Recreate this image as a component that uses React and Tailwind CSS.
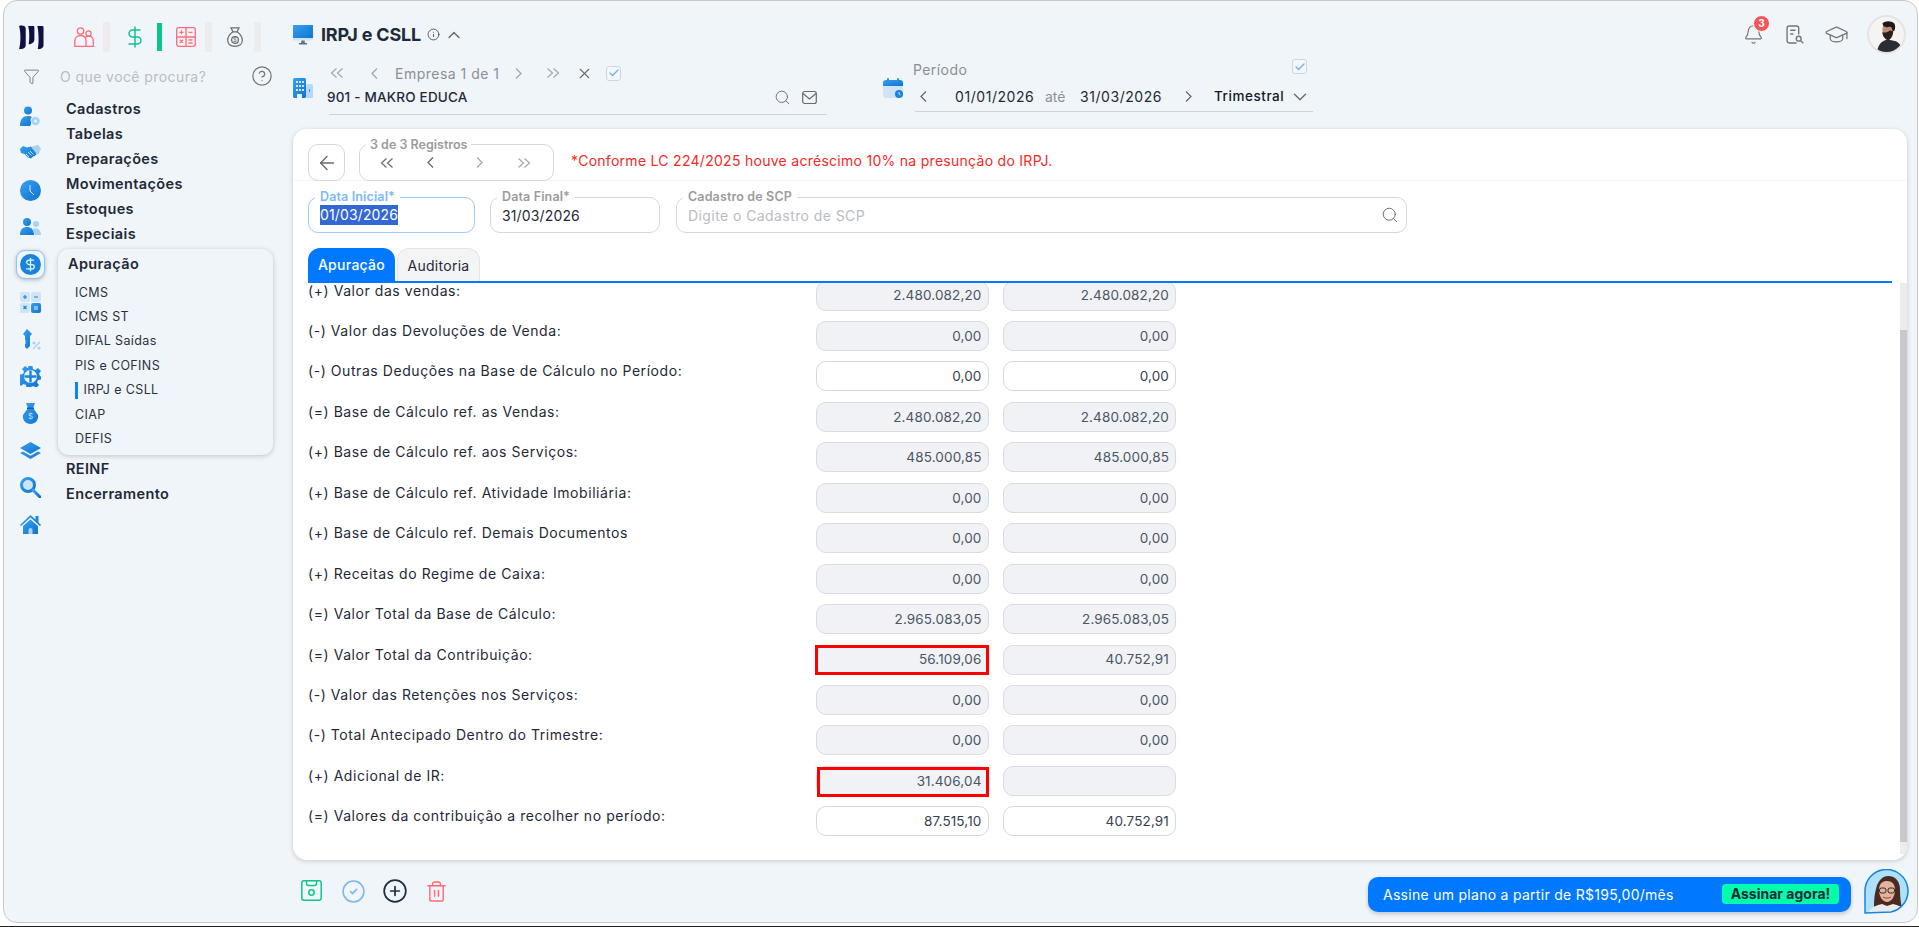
import React from 'react'
import { ArrowLeft, Bell, Check, ChevronDown, ChevronUp, CircleCheck, CircleHelp, CirclePlus, DollarSign, Funnel, GraduationCap, Info, Search, Trash2, X } from 'lucide-react'

const menuTop = ['Cadastros', 'Tabelas', 'Preparações', 'Movimentações', 'Estoques', 'Especiais']
const subMenu = ['ICMS', 'ICMS ST', 'DIFAL Saídas', 'PIS e COFINS', 'IRPJ e CSLL', 'CIAP', 'DEFIS']

const rows = [
    { label: '(+) Valor das vendas:', a: '2.480.082,20', b: '2.480.082,20' },
    { label: '(-) Valor das Devoluções de Venda:', a: '0,00', b: '0,00' },
    { label: '(-) Outras Deduções na Base de Cálculo no Período:', a: '0,00', b: '0,00', open: true },
    { label: '(=) Base de Cálculo ref. as Vendas:', a: '2.480.082,20', b: '2.480.082,20' },
    { label: '(+) Base de Cálculo ref. aos Serviços:', a: '485.000,85', b: '485.000,85' },
    { label: '(+) Base de Cálculo ref. Atividade Imobiliária:', a: '0,00', b: '0,00' },
    { label: '(+) Base de Cálculo ref. Demais Documentos', a: '0,00', b: '0,00' },
    { label: '(+) Receitas do Regime de Caixa:', a: '0,00', b: '0,00' },
    { label: '(=) Valor Total da Base de Cálculo:', a: '2.965.083,05', b: '2.965.083,05' },
    { label: '(=) Valor Total da Contribuição:', a: '56.109,06', b: '40.752,91', mark: 'top-[-1px] bottom-[-1px] left-[-2px] right-[-1px]' },
    { label: '(-) Valor das Retenções nos Serviços:', a: '0,00', b: '0,00' },
    { label: '(-) Total Antecipado Dentro do Trimestre:', a: '0,00', b: '0,00' },
    { label: '(+) Adicional de IR:', a: '31.406,04', b: '', mark: 'top-0 bottom-[-2px] left-0 right-[-1px]' },
    { label: '(=) Valores da contribuição a recolher no período:', a: '87.515,10', b: '40.752,91', open: true },
]

function Chevrons({ left, className }) {
    return (
        <svg viewBox="0 0 14 10" className={className} fill="none" stroke="currentColor" strokeWidth="1.2">
            {left ? <path d="M6.5 .5 1.5 5l5 4.5M12.5 .5 7.5 5l5 4.5" /> : <path d="M1.5 .5 6.5 5l-5 4.5M7.5 .5 12.5 5l-5 4.5" />}
        </svg>
    )
}

function Chev({ left, className }) {
    return (
        <svg viewBox="0 0 7 11" className={className} fill="none" stroke="currentColor" strokeWidth="1.3">
            {left ? <path d="M6 .5 1 5.5l5 5" /> : <path d="M1 .5l5 5-5 5" />}
        </svg>
    )
}

function CheckBox({ className }) {
    return (
        <span className={`flex items-center justify-center rounded-[3px] border border-[#cfd6de] bg-[#f3f6fa] ${className}`}>
            <Check size={12} strokeWidth={2.5} className="text-[#6fb1ee]" />
        </span>
    )
}

function Grad({ id }) {
    return (
        <defs>
            <linearGradient id={id} x1="0" y1="0" x2="1" y2="1">
                <stop offset="0" stopColor="#38a0f0" />
                <stop offset="1" stopColor="#0f74cf" />
            </linearGradient>
        </defs>
    )
}

function SideIcon({ name }) {
    const g = 'url(#g' + name + ')'
    const light = '#a9d2f3'
    return (
        <svg viewBox="0 0 21 21" className="w-[21px] h-[21px]">
            <Grad id={'g' + name} />
            {name === 'user' && <>
                <circle cx="8" cy="4.500" r="4" fill={g} />
                <path d="M0 20c0-7 3-10 8-10 2 0 3 .5 4 1-1.500 1-2 3-1 5 0 2 0 3-1 4z" fill={g} />
                <circle cx="15.500" cy="15" r="4.300" fill={light} />
                <circle cx="15.500" cy="15" r="1.500" fill="#f0f5fa" />
            </>}
            {name === 'hands' && <>
                <path d="M0 6l3-3 4 1.500 4-1 6 6.500-2 3-2 .5-2 2-3-1-3.500-3.500L1 10z" fill={g} />
                <path d="M12 3.500l4-1 2-1 3 4-2.500 6-1.500 0-5-6.500z" fill={light} />
                <path d="M8 9l3.500 3.500M10 8l3.500 3.500M6 11l3 3" stroke="#f0f5fa" strokeWidth=".8" />
            </>}
            {name === 'clock' && <>
                <circle cx="10.500" cy="10.500" r="10.500" fill={g} />
                <path d="M10 5v6l4 4" stroke="#cfe6fa" strokeWidth="1" fill="none" />
            </>}
            {name === 'users' && <>
                <circle cx="7" cy="5" r="4" fill={g} />
                <path d="M0 18c0-6 3-8 7-8s7 2 7 8z" fill={g} />
                <circle cx="16" cy="7" r="3" fill={light} />
                <path d="M12 12c5-2 9 0 9 6h-6z" fill={light} />
            </>}
            {name === 'calc' && <>
                <rect x="0" y="0" width="10" height="10" rx="2" fill="#cfe4f7" />
                <rect x="11" y="0" width="10" height="10" rx="2" fill="#cfe4f7" />
                <rect x="0" y="11" width="10" height="10" rx="2" fill="#cfe4f7" />
                <rect x="11" y="11" width="10" height="10" rx="2" fill={g} />
                <path d="M3 5h4M5 3v4M14 5h4M3.500 14l3 3M6.500 14l-3 3" stroke="#1a84dc" strokeWidth="1.200" />
                <path d="M14 15h4M14 17h4" stroke="#e5f2fd" strokeWidth="1.200" />
            </>}
            {name === 'key' && <>
                <path d="M7 0l5 5-2 2v10l-3 3-2-2v-3l1-1-1-1 1-1-1-1V7L3 5z" fill={g} />
                <path d="M13 20l7-7" stroke={light} strokeWidth="1.500" />
                <circle cx="14" cy="14" r="1.600" fill={light} />
                <circle cx="19" cy="19" r="1.600" fill={light} />
            </>}
            {name === 'gear' && <>
                <path d="M8.500 0h4l.5 3 2.500 1 2.500-2 3 3-2 2.500 1 2.500 1 .5v3l-3 .5-1 2.500 2 2.500-3 3-2.500-2-2.500 1-.5 1h-4l-.5-3-2.500-1-2.500 2-3-3 2-2.500L0 12.500v-4l3-.5 1-2.500-2-2.500 3-3 2.500 2L8 2z" fill={g} />
                <circle cx="10.500" cy="10.500" r="6.500" fill="#f0f5fa" />
                <path d="M10.500 4.500v12M4.500 10.500h12" stroke="#1a84dc" strokeWidth="2.400" />
            </>}
            {name === 'bag' && <>
                <path d="M6 0h9l-2 5 5 7c1 5-3 9-7.500 9S2 17 3 12l5-7z" fill={g} />
                <rect x="7" y="4.500" width="7" height="1.500" fill="#0c63b5" />
                <text x="10.500" y="16" fontSize="8" textAnchor="middle" fill="#bfe0fa">$</text>
            </>}
            {name === 'stack' && <>
                <path d="M10.500 2 21 8l-10.500 6L0 8z" fill={g} />
                <path d="M3 11.500 0 13l10.500 6L21 13l-3-1.500-7.500 4.300z" fill={g} />
            </>}
            {name === 'search' && <>
                <circle cx="8" cy="8" r="6.500" fill="#cfe4f7" stroke={g} strokeWidth="3" />
                <path d="M13 13l7 7" stroke={g} strokeWidth="3" strokeLinecap="round" />
            </>}
            {name === 'home' && <>
                <path d="M0 10 10.500 0l5 4.500V1h3v6.500L21 10l-1 1L10.500 2.500 1 11z" fill={g} />
                <path d="M3 11l7.500-6.500L18 11v8H3z" fill={g} />
                <path d="M8.500 19v-4a2 2 0 0 1 4 0v4z" fill={light} />
            </>}
        </svg>
    )
}

function Field({ label, w, focus, children }) {
    return (
        <div className={`relative h-[36px] rounded-[10px] border flex items-center px-[11px] text-[14px] tracking-[0.01em] ${w} ${focus ? 'border-[#9ccbfb]' : 'border-[#d3d7de]'}`}>
            <span className={`absolute -top-[8px] left-[6px] bg-white px-[5px] text-[12.500px] leading-[14px] font-semibold whitespace-nowrap ${focus ? 'text-[#7db8fb]' : 'text-[#9b9b9b]'}`}>{label}</span>
            {children}
        </div>
    )
}

function Value({ v, open, mark, w }) {
    return (
        <div className={`relative h-[30px] rounded-[10px] border flex items-center justify-end pr-[6px] text-[13.500px] tracking-[0.01em] ${w} ${open ? 'bg-white border-[#d3d7de] text-[#374151]' : 'bg-[#f0f2f5] border-[#d8dbe1] text-[#4b5563]'}`}>
            {v}
            {mark && <span className={`absolute border-[3px] border-[#ff0000] ${mark}`}></span>}
        </div>
    )
}

function Sidebar() {
    return (
        <aside className="w-[289px] shrink-0 flex flex-col">
            <div className="h-[30px] mt-[21px] ml-[15px] flex items-center">
                <svg viewBox="0 0 26 26" className="w-[25px] h-[25px] text-[#101042]" fill="currentColor">
                    <path d="M0 1c4-1 7 0 7 3v17c0 3-3 4-7 4 2-5 2-19 0-24z" />
                    <path d="M9.500 1h5c1 0 1.500 .5 1.500 1.500V15c0 3-3 5-6 5 1-5 1-14-.5-19z" />
                    <path d="M19 1h5c1 0 1.500 .5 1.500 1.500V21c0 3-3 4-6 4 1.500-7 1-18-.5-24z" />
                </svg>
                <svg viewBox="0 0 20 20" className="w-[20px] h-[20px] ml-[30px] text-[#ff6b76]" fill="none" stroke="currentColor" strokeWidth="1.300">
                    <circle cx="6.500" cy="4" r="3.200" />
                    <circle cx="14.500" cy="6.500" r="2.600" />
                    <path d="M.8 19.300V14c0-3 2-5.500 5.700-5.500S12 11 12 14v5.300z" />
                    <path d="M11 11c1-1.500 2-1.800 3.500-1.800 3 0 4.800 2 4.800 5v5.100H12" />
                </svg>
                <span className="w-[7px] h-[30px] ml-[9px] bg-[#ececec]"></span>
                <DollarSign size={24} strokeWidth={1.500} className="ml-[13px] text-[#10c48c]" />
                <span className="w-[5px] h-[28px] ml-[10px] bg-[#0cc48c]"></span>
                <svg viewBox="0 0 20 20" className="w-[20px] h-[20px] ml-[14px] text-[#ff6b76]" fill="none" stroke="currentColor" strokeWidth="1.300">
                    <rect x=".7" y=".7" width="18.600" height="18.600" rx="2" />
                    <path d="M10 .7v18.600M.7 10h18.600M3.500 5.300h4M5.500 3.300v4M12.500 5.300h4M3.800 12.800l3.200 3.200M7 12.800l-3.200 3.200M12.500 13h4M12.500 16h4" />
                </svg>
                <span className="w-[7px] h-[30px] ml-[9px] bg-[#ececec]"></span>
                <svg viewBox="0 0 16 20" className="w-[16px] h-[20px] ml-[15px] text-[#6b6b6b]" fill="none" stroke="currentColor" strokeWidth="1.200">
                    <path d="M4 .8h8l-2 4H6zM6 4.800c-3 2-5.300 5-5.300 8.500 0 4 3 6 7.300 6s7.300-2 7.300-6c0-3.500-2.300-6.500-5.300-8.500" />
                    <circle cx="8" cy="13" r="3.400" />
                    <text x="8" y="15" fontSize="6" textAnchor="middle" fill="currentColor" stroke="none">$</text>
                </svg>
                <span className="w-[7px] h-[30px] ml-[11px] bg-[#ececec]"></span>
            </div>
            <div className="h-[20px] mt-[14px] flex items-center">
                <Funnel size={17} strokeWidth={1.200} className="ml-[19px] text-[#6b6b6b]" />
                <span className="ml-[20px] text-[14px] tracking-[0.03em] text-[#b9bdc3]">O que você procura?</span>
                <CircleHelp size={22} strokeWidth={1.300} className="ml-auto mr-[20px] text-[#757575]" />
            </div>
            <div className="flex mt-[11.500px]">
                <div className="ml-[16px] w-[21px] flex flex-col">
                    {['user', 'hands', 'clock', 'users', 'dollar', 'calc', 'key', 'gear', 'bag', 'stack', 'search', 'home'].map((n) => (
                        <div key={n} className="h-[37.200px] flex items-center justify-center">
                            {n === 'dollar' ? (
                                <span className="shrink-0 w-[29px] h-[29px] rounded-[9px] border border-[#8cc4f2] bg-[#f0f5fa] shadow-[0_1px_4px_rgba(0,0,0,0.25)] flex items-center justify-center">
                                    <span className="w-[21px] h-[21px] rounded-full bg-[#1a84dc] text-[#e8f4fe] flex items-center justify-center">
                                        <DollarSign size={15} strokeWidth={2} />
                                    </span>
                                </span>
                            ) : <SideIcon name={n} />}
                        </div>
                    ))}
                </div>
                <nav className="ml-[25px] -mt-[1.500px] w-[215px] flex flex-col text-[14.500px] font-semibold tracking-[0.025em] text-[#1f2937]">
                    {menuTop.map((m) => <div key={m} className="h-[25px] leading-[25px]">{m}</div>)}
                    <div className="-ml-[8px] w-[215px] mt-[2.500px] rounded-[11px] bg-[#f0f5fa] shadow-[0_1px_5px_rgba(0,0,0,0.2)] pt-[4px] pb-[3px]">
                        <div className="h-[22px] leading-[22px] pl-[10px]">Apuração</div>
                        <div className="mt-[6.300px] flex flex-col pl-[17px] text-[12.500px] font-normal tracking-[0.03em] text-[#2a3240]">
                            {subMenu.map((s) => (
                                <div key={s} className="h-[24.400px] flex items-center">
                                    {s === 'IRPJ e CSLL' && <span className="w-[3px] h-[17px] bg-[#0a84ff] mr-[5.500px]"></span>}
                                    {s}
                                </div>
                            ))}
                        </div>
                    </div>
                    <div className="h-[25px] leading-[25px] mt-[1.500px]">REINF</div>
                    <div className="h-[25px] leading-[25px]">Encerramento</div>
                </nav>
            </div>
        </aside>
    )
}

function Header() {
    return (
        <div className="h-[128px] shrink-0 flex flex-col">
            <div className="h-[39px] mt-[14px] flex items-center">
                <svg viewBox="0 0 20 20" className="w-[20px] h-[20px]">
                    <Grad id="gmon" />
                    <rect y="0" width="20" height="13" fill="url(#gmon)" />
                    <rect y="13" width="20" height="2.500" fill="#cfe4f7" />
                    <path d="M8.500 15.500h3l.5 2.500h2v1.500H6V18h2z" fill="#5a7184" />
                </svg>
                <span className="ml-[8px] text-[18px] font-bold tracking-[-0.01em] text-[#1f2937]">IRPJ e CSLL</span>
                <Info size={13} strokeWidth={1.500} className="ml-[6px] text-[#374151]" />
                <ChevronUp size={20} strokeWidth={1.700} className="ml-[4px] text-[#6b6b6b]" />
                <div className="ml-auto flex items-center mr-[11px]">
                    <div className="relative">
                        <Bell size={21} strokeWidth={1.300} className="text-[#757575]" />
                        <span className="absolute -top-[9px] left-[10px] w-[17px] h-[17px] rounded-full bg-[#f2555a] border border-white text-white text-[10px] font-bold flex items-center justify-center">3</span>
                    </div>
                    <svg viewBox="0 0 17 18" className="w-[18px] h-[19px] ml-[22px] text-[#757575]" fill="none" stroke="currentColor" strokeWidth="1.300">
                        <path d="M10 17H3a2 2 0 0 1-2-2V3a2 2 0 0 1 2-2h7a2 2 0 0 1 2 2v6" />
                        <path d="M4 5h5M4 8.500h3" />
                        <circle cx="12" cy="13" r="2.300" />
                        <path d="M14 15l2.300 2.300" />
                    </svg>
                    <GraduationCap size={25} strokeWidth={1.200} className="ml-[20px] text-[#757575]" />
                    <svg viewBox="0 0 39 39" className="w-[39px] h-[39px] ml-[18px] rounded-full border-[2px] border-[#e8e3e3] bg-[#f6f3f3]">
                        <path d="M9 39c1-9 6-13 12-14l9 2c4 2 7 6 7 12z" fill="#2a2d33" />
                        <path d="M15 14c0-5 3-7 7-7 3 0 5 2 5 6 0 5-2 10-6 11-4 0-5-3-6-6z" fill="#b98f76" />
                        <path d="M15 7c3-3 10-3 13 0 2 3 1 7 0 9l-2-1c0-2-1-4-3-4-3 1-5 0-7-1z" fill="#1f1a18" />
                        <path d="M15 17c3 1 6 0 8-2l4 1c0 5-3 10-6 10-3-1-6-5-6-9z" fill="#2a211d" />
                    </svg>
                </div>
            </div>
            <div className="flex flex-1">
                <div className="w-[534px] flex">
                    <svg viewBox="0 0 20 20" className="w-[20px] h-[20px] mt-[24px] shrink-0">
                        <Grad id="gbld" />
                        <rect x="0" y="0" width="13" height="20" rx="1.500" fill="url(#gbld)" />
                        <rect x="13" y="6" width="7" height="14" rx="1.500" fill="#b9d8f3" />
                        <path d="M3 3h2v2H3zM6 3h2v2H6zM9 3h2v2H9zM3 7h2v2H3zM6 7h2v2H6zM9 7h2v2H9zM3 11h2v2H3zM6 11h2v2H6zM9 11h2v2H9z" fill="#cfe4f7" />
                        <path d="M4 20v-4h5v4z" fill="#e3effa" />
                        <rect x="16" y="11" width="1" height="3" fill="#2c8fe3" />
                    </svg>
                    <div className="ml-[16px] flex-1 flex flex-col">
                        <div className="h-[16px] mt-[11px] flex items-center text-[#a4a8ae]">
                            <Chevrons left className="w-[14px] h-[10px] ml-[1px]" />
                            <Chev left className="w-[7px] h-[11px] ml-[27px]" />
                            <span className="ml-[17px] w-[106px] text-[14px] tracking-[0.035em] text-[#8b8f95] whitespace-nowrap">Empresa 1 de 1</span>
                            <Chev className="w-[7px] h-[11px] ml-[14px]" />
                            <Chevrons className="w-[14px] h-[10px] ml-[24px]" />
                            <X size={17} strokeWidth={1.600} className="ml-[16px] text-[#6b6b6b]" />
                            <CheckBox className="w-[15px] h-[15px] ml-[13px]" />
                        </div>
                        <div className="h-[28px] mt-[6px] pb-[6px] border-b border-[#cfd3da] flex items-center">
                            <span className="-ml-[2px] text-[13.500px] font-medium tracking-[0.015em] text-[#1f2937]">901 - MAKRO EDUCA</span>
                            <Search size={17} strokeWidth={1.300} className="ml-auto text-[#6b6b6b]" />
                            <svg viewBox="0 0 15 15" className="w-[15px] h-[15px] ml-[11px] mr-[10px] text-[#6b6b6b]" fill="none" stroke="currentColor" strokeWidth="1.200">
                                <rect x=".7" y="1.500" width="13.600" height="12" rx="2" />
                                <path d="M1 3.500 7.500 9 14 3.500" />
                            </svg>
                        </div>
                    </div>
                </div>
                <div className="ml-[56px] flex">
                    <svg viewBox="0 0 20 20" className="w-[20px] h-[20px] mt-[24px] shrink-0">
                        <Grad id="gcal" />
                        <rect y="2" width="20" height="18" rx="3" fill="#cfe4f7" />
                        <path d="M0 8V5a3 3 0 0 1 3-3h14a3 3 0 0 1 3 3v3z" fill="url(#gcal)" />
                        <rect x="4" y="0" width="2" height="4" rx="1" fill="#2c8fe3" />
                        <rect x="14" y="0" width="2" height="4" rx="1" fill="#2c8fe3" />
                        <circle cx="16" cy="16" r="4" fill="#1a84dc" />
                        <path d="M16 14v2l1.500 1" stroke="#fff" strokeWidth=".8" fill="none" />
                    </svg>
                    <div className="ml-[12px] w-[398px] flex flex-col">
                        <div className="h-[20px] mt-[6px] flex">
                            <span className="-ml-[2px] text-[14px] tracking-[0.03em] text-[#8b8f95] self-end">Período</span>
                            <CheckBox className="w-[15px] h-[15px] -mt-[1px] ml-auto mr-[6px]" />
                        </div>
                        <div className="h-[27px] mt-[5px] pb-[3px] border-b border-[#cfd3da] flex items-center text-[#6b6b6b]">
                            <Chev left className="w-[7px] h-[11px] ml-[5px]" />
                            <span className="ml-[28px] w-[76px] text-[14px] tracking-[0.04em] text-[#1f2937]">01/01/2026</span>
                            <span className="ml-[14px] w-[22px] text-[14px] text-[#8b8f95]">até</span>
                            <span className="ml-[13px] w-[78px] text-[14px] tracking-[0.04em] text-[#1f2937]">31/03/2026</span>
                            <Chev className="w-[7px] h-[11px] ml-[27px]" />
                            <span className="ml-[22px] w-[72px] text-[13.500px] font-medium tracking-[0.04em] text-[#111827]">Trimestral</span>
                            <ChevronDown size={22} strokeWidth={1.500} className="ml-[3px]" />
                        </div>
                    </div>
                </div>
            </div>
        </div>
    )
}

function Card() {
    return (
        <div className="flex-1 min-h-0 mr-[10px] rounded-[14px] bg-white shadow-[0_1px_5px_rgba(0,0,0,0.18)] flex flex-col overflow-hidden">
            <div className="h-[52px] shrink-0 pt-[15px] pl-[15px] border-b border-[#f6f6f6] flex items-start">
                <div className="w-[37px] h-[37px] rounded-[10px] border border-[#d3d7de] flex items-center justify-center text-[#6b6b6b]">
                    <ArrowLeft size={22} strokeWidth={1.600} />
                </div>
                <div className="relative w-[195px] h-[37px] ml-[14px] rounded-[10px] border border-[#d3d7de] flex items-center text-[#a4a8ae]">
                    <span className="absolute -top-[7px] left-[6px] bg-white px-[4px] text-[12.500px] leading-[14px] font-semibold text-[#9b9b9b] whitespace-nowrap">3 de 3 Registros</span>
                    <Chevrons left className="w-[14px] h-[10px] ml-[20px] text-[#6b6b6b]" />
                    <Chev left className="w-[7px] h-[11px] ml-[33px] text-[#6b6b6b]" />
                    <Chev className="w-[7px] h-[11px] ml-[42px]" />
                    <Chevrons className="w-[14px] h-[10px] ml-[34px]" />
                </div>
                <span className="ml-[17px] mt-[7px] text-[14px] leading-[20px] tracking-[0.02em] text-[#f5291f]">*Conforme LC 224/2025 houve acréscimo 10% na presunção do IRPJ.</span>
            </div>
            <div className="mt-[16px] ml-[15px] flex shrink-0">
                <Field label="Data Inicial*" w="w-[167px]" focus>
                    <span className="bg-[#3367d1] text-white leading-[20px]">01/03/2026</span>
                </Field>
                <Field label="Data Final*" w="w-[170px] ml-[15px]">
                    <span className="text-[#1f2937]">31/03/2026</span>
                </Field>
                <Field label="Cadastro de SCP" w="w-[731px] ml-[16px]">
                    <span className="text-[#b9bdc3] tracking-[0.03em]">Digite o Cadastro de SCP</span>
                    <Search size={18} strokeWidth={1.300} className="ml-auto -mr-[4px] text-[#6b6b6b]" />
                </Field>
            </div>
            <div className="mt-[15px] ml-[15px] h-[33px] shrink-0 flex text-[14px] tracking-[0.02em]">
                <div className="w-[87px] rounded-t-[12px] bg-[#0078ff] text-white font-medium flex items-center justify-center">Apuração</div>
                <div className="w-[83px] ml-[2px] rounded-t-[12px] border border-b-0 border-[#e2e4e8] bg-[#f3f4f6] text-[#1f2937] flex items-center justify-center">Auditoria</div>
            </div>
            <div className="h-[2px] mx-[15px] shrink-0 bg-[#0078ff]"></div>
            <div className="flex-1 min-h-0 flex overflow-hidden">
                <div className="flex-1 overflow-hidden pl-[15px]">
                    <div className="-mt-[2.500px]">
                        {rows.map((r) => (
                            <div key={r.label} className="h-[40.460px] flex items-start">
                                <span className="w-[508px] text-[14px] leading-[20px] tracking-[0.04em] text-[#1f2937]">{r.label}</span>
                                <Value v={r.a} open={r.open} mark={r.mark} w="w-[172.500px]" />
                                <div className="w-[14px]"></div>
                                <Value v={r.b} open={r.open} w="w-[173.500px]" />
                            </div>
                        ))}
                    </div>
                </div>
                <div className="w-[7px] shrink-0 mb-[6px] bg-[#ececee]">
                    <div className="mt-[47px] h-[512px] bg-[#c8c8cc]"></div>
                </div>
            </div>
        </div>
    )
}

function Footer() {
    return (
        <div className="h-[62px] shrink-0 flex items-center">
            <svg viewBox="0 0 21 21" className="w-[21px] h-[21px] ml-[8px] -mt-[1px] text-[#10c48c]" fill="none" stroke="currentColor" strokeWidth="1.500">
                <path d="M3 .8h15A2.200 2.200 0 0 1 20.200 3v15a2.200 2.200 0 0 1-2.200 2.200H3A2.200 2.200 0 0 1 .8 18V3A2.200 2.200 0 0 1 3 .8z" />
                <path d="M5.500 1v2.500a2 2 0 0 0 2 2h6a2 2 0 0 0 2-2V1" />
                <circle cx="10.500" cy="12.500" r="2.700" />
            </svg>
            <CircleCheck size={25} strokeWidth={1.500} className="ml-[19px] text-[#7db8ee]" />
            <CirclePlus size={26} strokeWidth={1.600} className="ml-[16px] text-[#1f2f44]" />
            <Trash2 size={23} strokeWidth={1.500} className="ml-[17px] text-[#ff6b76]" />
            <div className="ml-auto mt-[6px] w-[483px] h-[35px] rounded-[10px] bg-[#0078ff] shadow-[0_2px_4px_rgba(0,0,0,0.2)] flex items-center pl-[15px]">
                <span className="text-[14px] tracking-[0.02em] text-white">Assine um plano a partir de R$195,00/mês</span>
                <span className="ml-auto mr-[12px] w-[117px] h-[20px] rounded-[4px] bg-[#00ffaa] text-[14px] leading-[20px] font-bold text-center text-[#1f2937]">Assinar agora!</span>
            </div>
            <svg viewBox="0 0 45 45" className="w-[45px] h-[45px] ml-[13px] mr-[8px] mt-[1px] shrink-0">
                <defs>
                    <clipPath id="womanClip"><path d="M1 44V22a21.500 21.500 0 1 1 26 21z" /></clipPath>
                </defs>
                <g clipPath="url(#womanClip)">
                    <rect width="45" height="45" fill="#aee0fa" />
                    <path d="M10 44c0-10 0-17 2-24 2-9 7-13 12-13 8 0 12 6 12 14 0 8 1 15 3 23z" fill="#4a2a22" />
                    <path d="M15 21c0-7 4-9 8-9 5 0 8 3 8 9 0 7-4 12-8 12s-8-5-8-12z" fill="#e3b39a" />
                    <path d="M4 45c2-7 9-9 14-10l5 2 6-2c5 1 11 3 13 10z" fill="#e8ecec" />
                    <rect x="15.500" y="19" width="6.500" height="5" rx="2" fill="none" stroke="#2a2a2a" strokeWidth="1" />
                    <rect x="24" y="19" width="6.500" height="5" rx="2" fill="none" stroke="#2a2a2a" strokeWidth="1" />
                    <path d="M19 28c2 1.500 6 1.500 8 0" stroke="#a23c3c" strokeWidth="1" fill="none" />
                </g>
                <path d="M1 44V22a21.500 21.500 0 1 1 26 21z" fill="none" stroke="#1a84dc" strokeWidth="1.500" />
            </svg>
        </div>
    )
}

export default function App() {
    return (
        <div className="w-[1919px] h-[927px] overflow-hidden bg-white text-[#1f2937] [font-family:Inter,sans-serif]">
            <div className="ml-[3px] mr-[1px] h-[923px] rounded-[14px] border border-[#c8c8c8] bg-[#f0f5fa] flex">
                <Sidebar />
                <main className="flex-1 min-w-0 flex flex-col">
                    <Header />
                    <Card />
                    <Footer />
                </main>
            </div>
            <div className="mt-[3px] h-[1px] bg-[#222222]"></div>
        </div>
    )
}
